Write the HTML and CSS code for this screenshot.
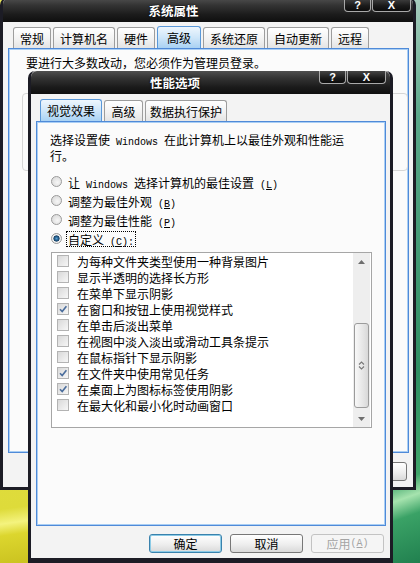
FILE: index.html
```html
<!DOCTYPE html>
<html lang="zh-CN">
<head>
    <meta charset="UTF-8">
    <meta name="viewport" content="width=device-width, initial-scale=1.0">
    <title>性能选项</title>
    <link rel="stylesheet" href="styles.css">
</head>
<body>
    <div class="desktop">

        <!-- back window -->
        <div class="window sys-window">
            <div class="titlebar">
                <span class="title">系统属性</span>
                <div class="caption-buttons">
                    <span class="cap-btn help">?</span>
                    <span class="cap-btn close">X</span>
                </div>
            </div>
            <div class="window-body">
                <div class="tabs">
                    <span class="tab">常规</span>
                    <span class="tab">计算机名</span>
                    <span class="tab">硬件</span>
                    <span class="tab active">高级</span>
                    <span class="tab">系统还原</span>
                    <span class="tab">自动更新</span>
                    <span class="tab">远程</span>
                </div>
                <div class="panel sys-panel">
                    <p class="note">要进行大多数改动，您必须作为管理员登录。</p>
                    <div class="groupbox"></div>
                </div>
                <div class="dialog-buttons">
                    <span class="button">应用</span>
                </div>
            </div>
        </div>

        <!-- front window -->
        <div class="window perf-window">
            <div class="titlebar">
                <span class="title">性能选项</span>
                <div class="caption-buttons">
                    <span class="cap-btn help">?</span>
                    <span class="cap-btn close">X</span>
                </div>
            </div>
            <div class="window-body">
                <div class="tabs">
                    <span class="tab active">视觉效果</span>
                    <span class="tab">高级</span>
                    <span class="tab">数据执行保护</span>
                </div>
                <div class="panel perf-panel">
                    <p class="intro">选择设置使<span class="latin"> Windows </span>在此计算机上以最佳外观和性能运<br>行。</p>

                    <div class="radios">
                        <div class="radio-row"><span class="radio"></span><span class="label">让<span class="latin"> Windows </span>选择计算机的最佳设置<span class="latin"> (<u>L</u>)</span></span></div>
                        <div class="radio-row"><span class="radio"></span><span class="label">调整为最佳外观<span class="latin"> (<u>B</u>)</span></span></div>
                        <div class="radio-row"><span class="radio"></span><span class="label">调整为最佳性能<span class="latin"> (<u>P</u>)</span></span></div>
                        <div class="radio-row"><span class="radio checked"></span><span class="label focused">自定义<span class="latin"> (<u>C</u>):</span></span></div>
                    </div>

                    <div class="listbox">
                        <div class="options">
                            <div class="option"><span class="check"></span>为每种文件夹类型使用一种背景图片</div>
                            <div class="option"><span class="check"></span>显示半透明的选择长方形</div>
                            <div class="option"><span class="check"></span>在菜单下显示阴影</div>
                            <div class="option"><span class="check"><svg viewBox="0 0 10 10"><polyline points="2,5.2 4.2,7.6 8.4,2.2"/></svg></span>在窗口和按钮上使用视觉样式</div>
                            <div class="option"><span class="check"></span>在单击后淡出菜单</div>
                            <div class="option"><span class="check"></span>在视图中淡入淡出或滑动工具条提示</div>
                            <div class="option"><span class="check"></span>在鼠标指针下显示阴影</div>
                            <div class="option"><span class="check"><svg viewBox="0 0 10 10"><polyline points="2,5.2 4.2,7.6 8.4,2.2"/></svg></span>在文件夹中使用常见任务</div>
                            <div class="option"><span class="check"><svg viewBox="0 0 10 10"><polyline points="2,5.2 4.2,7.6 8.4,2.2"/></svg></span>在桌面上为图标标签使用阴影</div>
                            <div class="option"><span class="check"></span>在最大化和最小化时动画窗口</div>
                        </div>
                        <div class="scrollbar">
                            <div class="scroll-arrow"><svg viewBox="0 0 7 4"><polygon points="0,4 3.5,0 7,4"/></svg></div>
                            <div class="scroll-track">
                                <div class="scroll-thumb">
                                    <svg viewBox="0 0 7 9"><polyline points="1,3.5 3.5,1 6,3.5"/><polyline points="1,5.5 3.5,8 6,5.5"/></svg>
                                </div>
                            </div>
                            <div class="scroll-arrow"><svg viewBox="0 0 7 4"><polygon points="0,0 3.5,4 7,0"/></svg></div>
                        </div>
                    </div>
                </div>
                <div class="dialog-buttons">
                    <span class="button default">确定</span>
                    <span class="button">取消</span>
                    <span class="button disabled">应用<span class="latin"> (<u>A</u>)</span></span>
                </div>
            </div>
        </div>

    </div>
</body>
</html>
```

FILE: styles.css
```css
* {
    box-sizing: border-box;
}

body {
    margin: 0;
    font-family: "Noto Sans CJK SC", "Liberation Sans", sans-serif;
    font-size: 12px;
    line-height: 15px;
    color: #000;
}

p {
    margin: 0;
}

.latin {
    font-family: "Liberation Mono", monospace;
    font-size: 10px;
    line-height: 1;
}

/* desktop wallpaper, only the corners show */
.desktop {
    position: relative;
    width: 420px;
    height: 563px;
    overflow: hidden;
    background:
        linear-gradient(172deg, #e9e65c 0%, #dedb3a 86%, #f4f37e 88.5%, #dcd62e 90.5%, #cdc522 95%, #bdb51c 100%) left top / 50% 100% no-repeat,
        linear-gradient(160deg, #d9e4df 0%, #5aa88a 30%, #2e8e62 70%, #3fa56a 86%, #a6e3ae 89%, #3aa266 92%, #21804f 100%) right top / 50% 100% no-repeat;
}

/* windows */
.window {
    position: absolute;
    display: flex;
    flex-direction: column;
    background: #f3f3f3;
    border: 3px solid #1c1c25;
    border-top: 0;
    border-radius: 7px 7px 0 0;
}

.sys-window {
    left: 0;
    top: -2px;
    width: 416px;
    height: 492px;
}

.perf-window {
    left: 28px;
    top: 71px;
    width: 365px;
    height: 492px;
    border-bottom-width: 5px;
}

.titlebar {
    display: flex;
    height: 24px;
    background: linear-gradient(#4f4f4f 0%, #343434 30%, #1b1b1b 70%, #0f0f0f 100%);
    border-radius: 6px 6px 0 0;
}

.perf-window .titlebar {
    height: 23px;
}

.title {
    flex: 1;
    display: flex;
    align-items: center;
    justify-content: center;
    color: #fff;
    font-size: 12.5px;
    font-weight: bold;
    text-shadow: 0 0 2px #000;
}

.caption-buttons {
    display: flex;
    gap: 1px;
    align-self: flex-start;
    margin-right: 2px;
}

.perf-window .caption-buttons {
    margin-right: 4px;
}

.cap-btn {
    display: flex;
    align-items: center;
    justify-content: center;
    height: 14px;
    color: #fff;
    font: bold 11px "Liberation Sans", sans-serif;
    background: linear-gradient(#454545, #1a1a1a 60%, #0c0c0c);
    border: 1px solid #a9a9a9;
    border-top: 0;
    border-radius: 0 0 4px 4px;
}

.perf-window .cap-btn {
    height: 13px;
}

.cap-btn.help {
    width: 27px;
}

.cap-btn.close {
    width: 39px;
}

.window-body {
    display: flex;
    flex-direction: column;
    padding: 4px 4px 0 5px;
}

.perf-window .window-body {
    padding-top: 5px;
}

/* tabs */
.tabs {
    display: flex;
    align-items: flex-end;
    gap: 2px;
    height: 22px;
    padding-left: 5px;
}

.perf-window .tabs {
    padding-left: 4px;
}

.tab {
    display: flex;
    align-items: center;
    justify-content: center;
    height: 21px;
    padding: 0 6px;
    border: 1px solid #9d9d9d;
    border-bottom: 0;
    border-radius: 3px 3px 0 0;
    background: linear-gradient(#ffffff, #f1f1f1 60%, #e4e4e4);
}

.perf-window .tab {
    min-width: 39px;
    padding: 0 4px;
}

.tab.active,
.perf-window .tab.active {
    height: 22px;
    padding: 0 9px;
    border-color: #5a98d8;
    background: linear-gradient(#eef6fd, #cfe6f9 50%, #a9d2f3);
}

.perf-window .tab.active {
    padding: 0 6px;
}

/* tab page */
.panel {
    height: 405px;
    background: #fbfbfb;
    border: 1px solid #4f8ad8;
    box-shadow: inset 0 0 0 1px #a9cef4;
}

.sys-panel {
    padding: 6px 0 0 17px;
}

.groupbox {
    height: 78px;
    margin: 23px 0 0 -4px;
    border: 1px solid #d6d6d6;
    border-radius: 4px;
}

.perf-panel {
    padding: 10px 0 0 13px;
}

.intro {
    height: 30px;
}

.radios {
    margin-top: 10px;
}

.radio-row {
    display: flex;
    align-items: center;
    gap: 4px;
    height: 19px;
    padding-left: 1px;
}

.radio {
    width: 11px;
    height: 11px;
    border-radius: 50%;
    border: 1px solid #9a9a9a;
    background: radial-gradient(circle at 60% 60%, #f6f6f6, #d4d4d4);
}

.radio.checked {
    background: radial-gradient(circle at 50% 50%, #5c9fd0 0, #23608f 1.8px, #173e62 2.8px, #f4f4f4 3.4px, #e2e2e2 100%);
}

.label {
    height: 16px;
    padding: 0 1px;
    border: 1px solid transparent;
}

.label.focused {
    border: 1px dotted #000;
}

/* list of effects */
.listbox {
    display: flex;
    width: 321px;
    height: 176px;
    margin: 4px 0 0 1px;
    border: 1px solid #a6a6a6;
    background: #fff;
}

.options {
    flex: 1;
    padding-left: 5px;
}

.option {
    display: flex;
    align-items: center;
    gap: 8px;
    height: 16px;
}

.check {
    display: flex;
    align-items: center;
    justify-content: center;
    width: 12px;
    height: 12px;
    border: 1px solid #b3b3b3;
    background: linear-gradient(135deg, #d9d9d9, #f7f7f7);
}

.check svg {
    width: 10px;
    height: 10px;
    fill: none;
    stroke: #4a6d9c;
    stroke-width: 1.6;
}

.scrollbar {
    display: flex;
    flex-direction: column;
    width: 17px;
    margin-right: 1px;
    background: #eeeeee;
}

.scroll-arrow {
    display: flex;
    align-items: center;
    justify-content: center;
    height: 17px;
}

.scroll-arrow svg {
    width: 7px;
    height: 4px;
    fill: #6e6e6e;
}

.scroll-track {
    flex: 1;
    padding-top: 53px;
}

.scroll-thumb {
    display: flex;
    align-items: center;
    justify-content: center;
    height: 85px;
    margin: 0 1px;
    border: 1px solid #9b9b9b;
    border-radius: 3px;
    background: linear-gradient(90deg, #f8f8f8, #e6e6e6 60%, #d8d8d8);
}

.scroll-thumb svg {
    width: 7px;
    height: 9px;
    fill: none;
    stroke: #777;
    stroke-width: 1.1;
}

/* OK / Cancel / Apply */
.dialog-buttons {
    display: flex;
    justify-content: flex-end;
    gap: 8px;
    margin-top: 8px;
    padding-right: 2px;
}

.sys-window .dialog-buttons {
    margin-top: 9px;
}

.button {
    display: flex;
    align-items: center;
    justify-content: center;
    width: 73px;
    height: 19px;
    border: 1px solid #777;
    border-radius: 3px;
    background: linear-gradient(#ffffff, #eeeeee 55%, #d9d9d9);
}

.button.default {
    border-color: #3a82ad;
    box-shadow: inset 0 0 0 1px #8ccbe6;
}

.button.disabled {
    color: #a4a4a4;
    border-color: #c3c3c3;
    background: #f5f5f5;
}
```
